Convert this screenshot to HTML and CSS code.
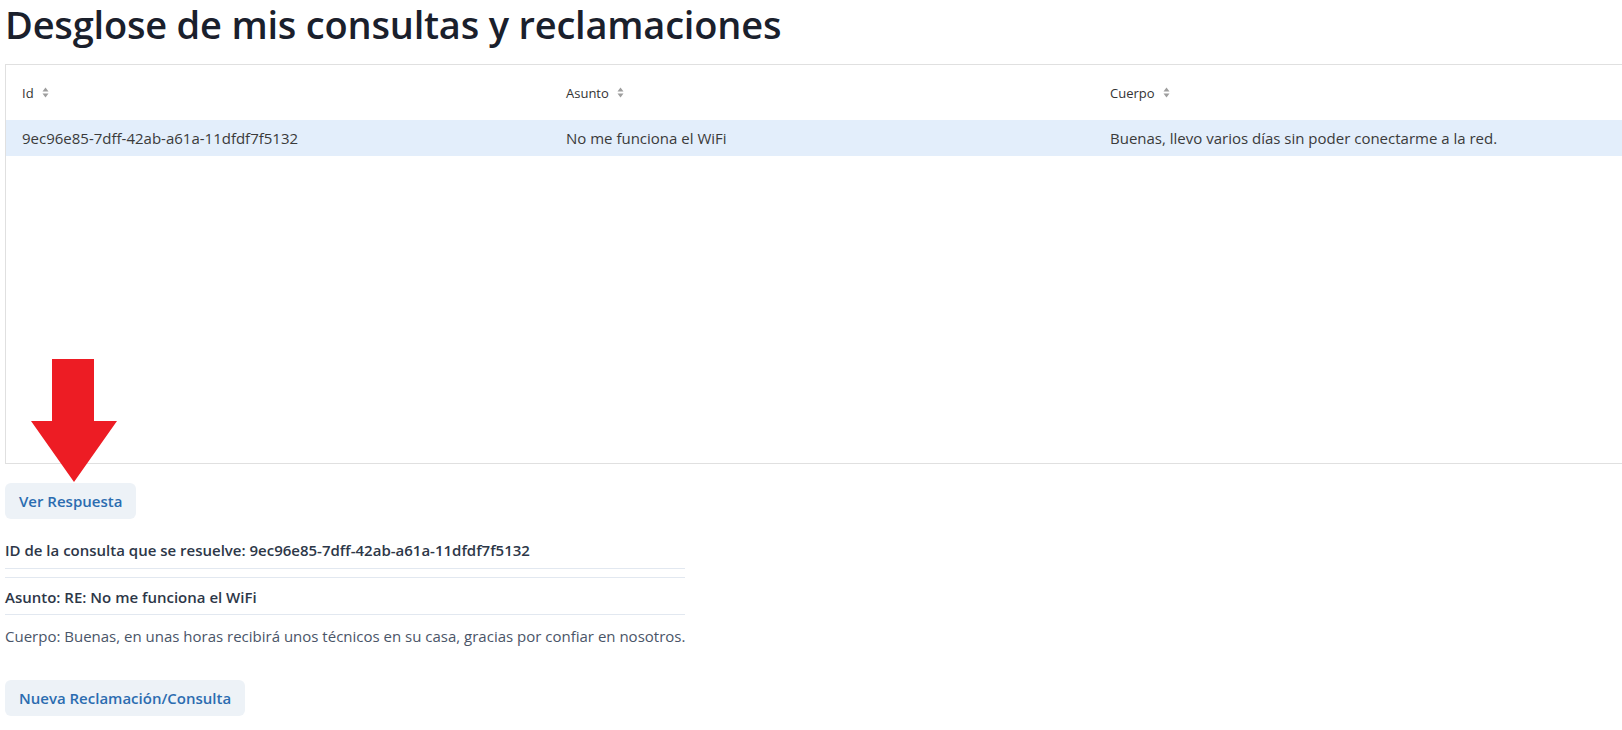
FILE: index.html
```html
<!DOCTYPE html>
<html lang="es">
<head>
<meta charset="utf-8">
<title>Desglose de mis consultas y reclamaciones</title>
<link rel="stylesheet" href="styles.css">
</head>
<body>
<main class="page">
  <h1 class="title">Desglose de mis consultas y reclamaciones</h1>

  <div class="grid-wrap">
    <div class="grid">
      <div class="grid-row grid-head">
        <div class="cell">Id <span class="sort"><svg width="7" height="11" viewBox="0 0 7 11"><path d="M3.5 0.5 L6.5 4.5 H0.5 Z" fill="#9e9e9e"/><path d="M3.5 10.5 L6.5 6.5 H0.5 Z" fill="#9e9e9e"/></svg></span></div>
        <div class="cell">Asunto <span class="sort"><svg width="7" height="11" viewBox="0 0 7 11"><path d="M3.5 0.5 L6.5 4.5 H0.5 Z" fill="#9e9e9e"/><path d="M3.5 10.5 L6.5 6.5 H0.5 Z" fill="#9e9e9e"/></svg></span></div>
        <div class="cell">Cuerpo <span class="sort"><svg width="7" height="11" viewBox="0 0 7 11"><path d="M3.5 0.5 L6.5 4.5 H0.5 Z" fill="#9e9e9e"/><path d="M3.5 10.5 L6.5 6.5 H0.5 Z" fill="#9e9e9e"/></svg></span></div>
      </div>
      <div class="grid-row grid-data selected">
        <div class="cell">9ec96e85-7dff-42ab-a61a-11dfdf7f5132</div>
        <div class="cell">No me funciona el WiFi</div>
        <div class="cell">Buenas, llevo varios días sin poder conectarme a la red.</div>
      </div>
    </div>
  </div>

  <div class="action">
    <button class="btn">Ver Respuesta</button>
    <svg class="arrow" width="90" height="125" viewBox="0 0 90 125"><path d="M23 0 H65 V62 H88 L45 123 L2 62 H23 Z" fill="#ed1c24"/></svg>
  </div>

  <div class="answer">
    <div class="item strong first">ID de la consulta que se resuelve: 9ec96e85-7dff-42ab-a61a-11dfdf7f5132</div>
    <div class="item strong second">Asunto: RE: No me funciona el WiFi</div>
    <div class="item body">Cuerpo: Buenas, en unas horas recibirá unos técnicos en su casa, gracias por confiar en nosotros.</div>
  </div>

  <div class="footer-action">
    <button class="btn">Nueva Reclamación/Consulta</button>
  </div>
</main>
</body>
</html>
```

FILE: styles.css
```css
html {
  overflow: hidden;
}
body {
  margin: 0;
  background: #ffffff;
  font-family: "Open Sans", "Noto Sans", "Liberation Sans", sans-serif;
  color: #2d3748;
}
.page {
  padding: 0 5px;
}
.title {
  margin: 0 0 16px 0;
  font-size: 38px;
  line-height: 48px;
  font-weight: 600;
  letter-spacing: -0.2px;
  color: #1a202c;
}
.grid-wrap {
  width: 1640px;
}
.grid {
  box-sizing: border-box;
  height: 400px;
  border: 1px solid #e0e0e0;
}
.grid-row {
  display: grid;
  grid-template-columns: 544px 544px 544px;
}
.grid-head {
  height: 55px;
  align-items: center;
  font-size: 13px;
  color: #333333;
}
.grid-data {
  height: 36px;
  align-items: center;
  font-size: 15px;
  color: #3a3a3a;
}
.selected {
  background: #e3eefb;
}
.cell {
  padding: 0 16px;
  display: flex;
  align-items: center;
  white-space: nowrap;
}
.sort {
  display: inline-flex;
  margin-left: 8px;
}
.action {
  position: relative;
  margin-top: 19px;
}
.arrow {
  position: absolute;
  left: 24px;
  top: -124px;
}
.btn {
  font-family: "Open Sans", "Noto Sans", "Liberation Sans", sans-serif;
  height: 36px;
  padding: 0 14px;
  border: none;
  border-radius: 6px;
  background: #edf2f7;
  color: #2b6cb0;
  font-size: 15px;
  font-weight: 600;
}
.answer {
  display: inline-flex;
  flex-direction: column;
  margin-top: 20px;
  font-size: 15px;
}
.item {
  line-height: 22px;
}
.strong {
  font-weight: 600;
  color: #2d3748;
}
.first {
  padding-bottom: 7px;
  border-bottom: 1px solid #e2e8f0;
  margin-bottom: 8px;
}
.second {
  border-top: 1px solid #e2e8f0;
  padding: 8px 0 6px;
  border-bottom: 1px solid #e2e8f0;
}
.body {
  padding-top: 10px;
  color: #4a5568;
}
.footer-action {
  margin-top: 33px;
}
```
